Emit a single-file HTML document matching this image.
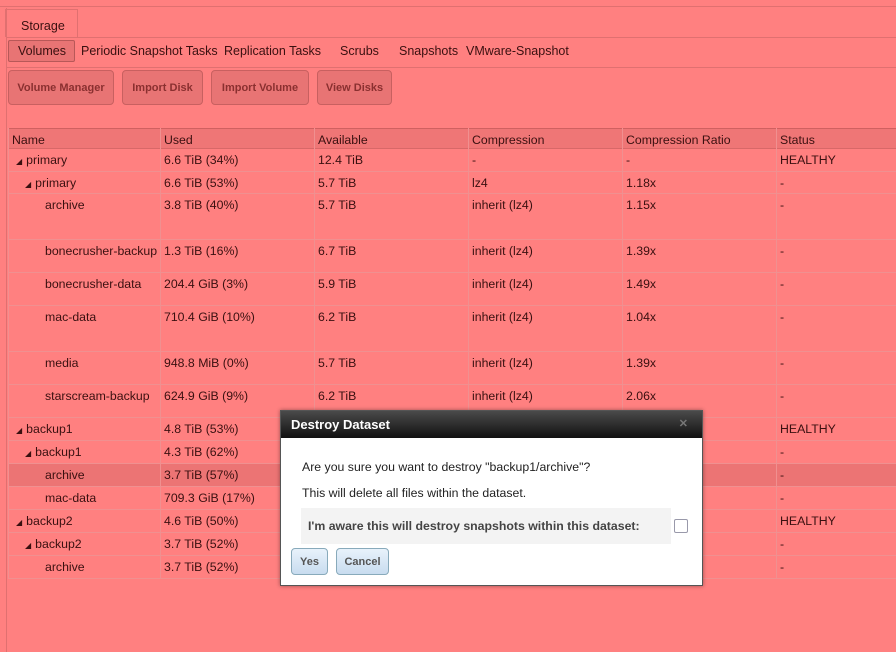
<!DOCTYPE html><html><head><style>
body{margin:0;width:896px;height:652px;background:#ff8080;font-family:"Liberation Sans",sans-serif;font-size:12.3px;color:#3a1010;position:relative;overflow:hidden}
.a{position:absolute}
.btn{position:absolute;top:70px;height:35px;border:1px solid #c86060;border-radius:4px;background:#e87474;font-weight:bold;font-size:11px;color:#8a3030;display:flex;align-items:center;justify-content:center;box-sizing:border-box}
.row{position:absolute;left:8px;width:888px;border-bottom:1px solid #f09090;box-sizing:border-box}
.row .c{position:absolute;top:4px}
.t{font-size:8px;margin-right:4px}
.vl{position:absolute;top:128px;height:451px;width:1px;background:#f09090}
</style></head><body>
<div class="a" style="left:0;top:6px;width:896px;height:1px;background:#e07070"></div>
<div class="a" style="left:6px;top:8px;width:1px;height:644px;background:#e07070"></div>
<div class="a" style="left:5px;top:9px;width:73px;height:28px;border:1px solid #e07070;border-bottom:none;box-sizing:border-box"></div>
<div class="a" style="left:21px;top:19px;font-size:12.5px">Storage</div>
<div class="a" style="left:6px;top:37px;width:890px;height:1px;background:#e07070"></div>
<div class="a" style="left:8px;top:40px;width:67px;height:22px;border:1px solid #b85858;background:#e87474;border-radius:2px;box-sizing:border-box"></div>
<div class="a" style="left:18px;top:44px;font-size:12.5px">Volumes</div>
<div class="a" style="left:81px;top:44px;font-size:12.5px">Periodic Snapshot Tasks</div>
<div class="a" style="left:224px;top:44px;font-size:12.5px">Replication Tasks</div>
<div class="a" style="left:340px;top:44px;font-size:12.5px">Scrubs</div>
<div class="a" style="left:399px;top:44px;font-size:12.5px">Snapshots</div>
<div class="a" style="left:466px;top:44px;font-size:12.5px">VMware-Snapshot</div>
<div class="a" style="left:6px;top:67px;width:890px;height:1px;background:#e07070"></div>
<div class="btn" style="left:8px;width:106px">Volume Manager</div>
<div class="btn" style="left:122px;width:81px">Import Disk</div>
<div class="btn" style="left:211px;width:98px">Import Volume</div>
<div class="btn" style="left:317px;width:75px">View Disks</div>
<div class="row" style="top:128px;height:21px;background:#ef7676;border-top:1px solid #d06060;border-bottom:1px solid #d86868">
<span class="c" style="left:4px">Name</span><span class="c" style="left:156px">Used</span><span class="c" style="left:310px">Available</span><span class="c" style="left:464px">Compression</span><span class="c" style="left:618px">Compression Ratio</span><span class="c" style="left:772px">Status</span></div>
<div class="row" style="top:149px;height:23px"><span class="c" style="left:8px"><span class="t">◢</span>primary</span><span class="c" style="left:156px">6.6 TiB (34%)</span><span class="c" style="left:310px">12.4 TiB</span><span class="c" style="left:464px">-</span><span class="c" style="left:618px">-</span><span class="c" style="left:772px">HEALTHY</span></div>
<div class="row" style="top:172px;height:22px"><span class="c" style="left:17px"><span class="t">◢</span>primary</span><span class="c" style="left:156px">6.6 TiB (53%)</span><span class="c" style="left:310px">5.7 TiB</span><span class="c" style="left:464px">lz4</span><span class="c" style="left:618px">1.18x</span><span class="c" style="left:772px">-</span></div>
<div class="row" style="top:194px;height:46px"><span class="c" style="left:37px">archive</span><span class="c" style="left:156px">3.8 TiB (40%)</span><span class="c" style="left:310px">5.7 TiB</span><span class="c" style="left:464px">inherit (lz4)</span><span class="c" style="left:618px">1.15x</span><span class="c" style="left:772px">-</span></div>
<div class="row" style="top:240px;height:33px"><span class="c" style="left:37px">bonecrusher-backup</span><span class="c" style="left:156px">1.3 TiB (16%)</span><span class="c" style="left:310px">6.7 TiB</span><span class="c" style="left:464px">inherit (lz4)</span><span class="c" style="left:618px">1.39x</span><span class="c" style="left:772px">-</span></div>
<div class="row" style="top:273px;height:33px"><span class="c" style="left:37px">bonecrusher-data</span><span class="c" style="left:156px">204.4 GiB (3%)</span><span class="c" style="left:310px">5.9 TiB</span><span class="c" style="left:464px">inherit (lz4)</span><span class="c" style="left:618px">1.49x</span><span class="c" style="left:772px">-</span></div>
<div class="row" style="top:306px;height:46px"><span class="c" style="left:37px">mac-data</span><span class="c" style="left:156px">710.4 GiB (10%)</span><span class="c" style="left:310px">6.2 TiB</span><span class="c" style="left:464px">inherit (lz4)</span><span class="c" style="left:618px">1.04x</span><span class="c" style="left:772px">-</span></div>
<div class="row" style="top:352px;height:33px"><span class="c" style="left:37px">media</span><span class="c" style="left:156px">948.8 MiB (0%)</span><span class="c" style="left:310px">5.7 TiB</span><span class="c" style="left:464px">inherit (lz4)</span><span class="c" style="left:618px">1.39x</span><span class="c" style="left:772px">-</span></div>
<div class="row" style="top:385px;height:33px"><span class="c" style="left:37px">starscream-backup</span><span class="c" style="left:156px">624.9 GiB (9%)</span><span class="c" style="left:310px">6.2 TiB</span><span class="c" style="left:464px">inherit (lz4)</span><span class="c" style="left:618px">2.06x</span><span class="c" style="left:772px">-</span></div>
<div class="row" style="top:418px;height:23px"><span class="c" style="left:8px"><span class="t">◢</span>backup1</span><span class="c" style="left:156px">4.8 TiB (53%)</span><span class="c" style="left:772px">HEALTHY</span></div>
<div class="row" style="top:441px;height:23px"><span class="c" style="left:17px"><span class="t">◢</span>backup1</span><span class="c" style="left:156px">4.3 TiB (62%)</span><span class="c" style="left:772px">-</span></div>
<div class="row" style="top:464px;height:23px;background:#ec7474"><span class="c" style="left:37px">archive</span><span class="c" style="left:156px">3.7 TiB (57%)</span><span class="c" style="left:772px">-</span></div>
<div class="row" style="top:487px;height:23px"><span class="c" style="left:37px">mac-data</span><span class="c" style="left:156px">709.3 GiB (17%)</span><span class="c" style="left:772px">-</span></div>
<div class="row" style="top:510px;height:23px"><span class="c" style="left:8px"><span class="t">◢</span>backup2</span><span class="c" style="left:156px">4.6 TiB (50%)</span><span class="c" style="left:772px">HEALTHY</span></div>
<div class="row" style="top:533px;height:23px"><span class="c" style="left:17px"><span class="t">◢</span>backup2</span><span class="c" style="left:156px">3.7 TiB (52%)</span><span class="c" style="left:772px">-</span></div>
<div class="row" style="top:556px;height:23px"><span class="c" style="left:37px">archive</span><span class="c" style="left:156px">3.7 TiB (52%)</span><span class="c" style="left:772px">-</span></div>
<div class="vl" style="left:8px"></div><div class="vl" style="left:160px"></div><div class="vl" style="left:314px"></div><div class="vl" style="left:468px"></div><div class="vl" style="left:622px"></div><div class="vl" style="left:776px"></div>
<div class="a" style="left:280px;top:410px;width:423px;height:176px;background:#fff;border:1px solid #555;box-sizing:border-box;box-shadow:0 0 4px rgba(0,0,0,.4);color:#222">
<div style="height:27px;background:linear-gradient(#4a4a4a,#111);color:#fff;font-weight:bold;font-size:13px;line-height:27px;padding-left:10px">Destroy Dataset<span style="position:absolute;right:14px;color:#777;font-size:11px">✕</span></div>
<div class="a" style="left:21px;top:49px;font-size:12.3px">Are you sure you want to destroy "backup1/archive"?</div>
<div class="a" style="left:21px;top:75px;font-size:12.3px">This will delete all files within the dataset.</div>
<div class="a" style="left:20px;top:97px;width:370px;height:36px;background:#f3f3f3"></div>
<div class="a" style="left:27px;top:108px;font-weight:bold;font-size:12.3px;color:#444">I'm aware this will destroy snapshots within this dataset:</div>
<div class="a" style="left:393px;top:108px;width:14px;height:14px;border:1px solid #99a;box-sizing:border-box;border-radius:2px"></div>
<div class="a" style="left:10px;top:137px;width:37px;height:27px;border:1px solid #8ab;border-radius:4px;background:linear-gradient(#e8f2fb,#c8dcef);font-weight:bold;font-size:11px;color:#555;display:flex;align-items:center;justify-content:center;box-sizing:border-box">Yes</div>
<div class="a" style="left:55px;top:137px;width:53px;height:27px;border:1px solid #8ab;border-radius:4px;background:linear-gradient(#e8f2fb,#c8dcef);font-weight:bold;font-size:11px;color:#555;display:flex;align-items:center;justify-content:center;box-sizing:border-box">Cancel</div>
</div>
</body></html>
